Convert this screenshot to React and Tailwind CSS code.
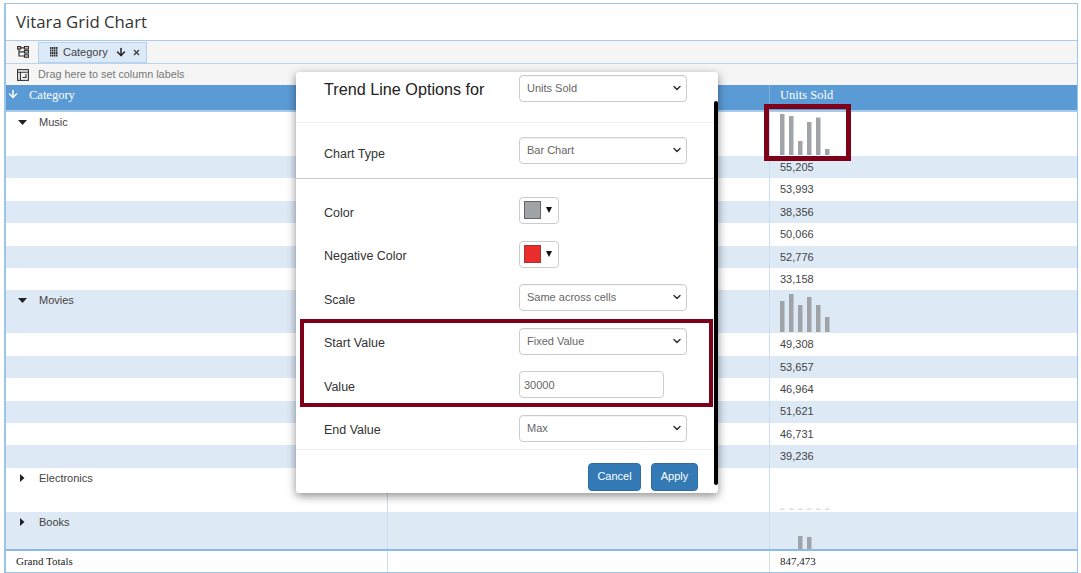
import React from 'react';
import { ArrowDown, ChevronDown, X } from 'lucide-react';

const COLS = 'grid grid-cols-[381px_382px_1fr]';

// sparkline bar heights, six slots per cell
const MUSIC_BARS = [41, 39, 14, 33, 37.5, 6];
const MOVIES_BARS = [31, 38, 27, 35, 27, 15];
const BOOKS_BARS = [0, 0, 13, 12, 0, 0];
const ELECTRONICS_BARS = [1.5, 1.5, 1.5, 1.5, 1.5, 1.5];

function Spark({ bars, height, light }) {
  return (
    <svg width="54" height={height} className="block">
      {bars.map((h, i) => (
        <rect key={i} x={i * 9} y={height - h} width="4.5" height={h} fill={light ? '#dcdde0' : '#a0a3a8'} />
      ))}
    </svg>
  );
}

function Row({ blue, h, label, open, value, children }) {
  return (
    <div className={`${COLS} ${h} ${blue ? 'bg-[#dde9f5]' : 'bg-white'}`}>
      <div className="flex items-start pl-[12px] pt-[3px] text-[11px] leading-[14px] text-[#444]">
        {label && (
          <>
            <span className="flex h-[14px] w-[21px] items-center">
              {open ? (
                <svg width="9" height="5" viewBox="0 0 9 5"><polygon points="0,0 9,0 4.5,5" fill="#222" /></svg>
              ) : (
                <svg width="9" height="8" viewBox="0 0 9 8"><polygon points="2,0 6.5,4 2,8" fill="#222" /></svg>
              )}
            </span>
            {label}
          </>
        )}
      </div>
      <div className="border-l border-[#c9dcf0]" />
      <div className="relative flex items-center border-l border-[#c9dcf0] pl-[10px] text-[11px] text-[#444]">
        {value}
        {children}
      </div>
    </div>
  );
}

function SelectBox({ value }) {
  return (
    <div className="relative w-[168px]">
      <select
        defaultValue={value}
        className="block h-[27px] w-full appearance-none rounded-[4px] border border-[#ccc] bg-white pl-[7px] text-[11px] text-[#666] shadow-[inset_0_1px_1px_rgba(0,0,0,0.05)]"
      >
        <option>{value}</option>
      </select>
      <ChevronDown size={12} strokeWidth={3} className="absolute right-[4px] top-[7px] text-[#333]" />
    </div>
  );
}

function ColorPick({ color, edge }) {
  return (
    <div className="flex h-[27px] w-[40px] items-start gap-[5px] rounded-[4px] border border-[#ccc] bg-white pl-[4px] pt-[3px]">
      <span className={`block h-[18px] w-[17px] border ${edge}`} style={{ background: color }} />
      <svg width="6" height="6" viewBox="0 0 6 6" className="mt-[6px]"><polygon points="0,0 6,0 3,6" fill="#111" /></svg>
    </div>
  );
}

function Field({ label, children }) {
  return (
    <div className="flex h-[27px] items-center">
      <div className="w-[223px] pl-[28px] pt-[5px] text-[12.5px] text-[#333]">{label}</div>
      {children}
    </div>
  );
}

function Modal() {
  return (
    <div className="absolute left-[296px] top-[72px] h-[421px] w-[422px] rounded-[3px] bg-white font-['Liberation_Sans',sans-serif] shadow-[0_3px_10px_rgba(0,0,0,0.45)]">
      <div className="flex h-[51px] items-start border-b border-[#f0f0f0] pt-[3px]">
        <div className="w-[223px] pl-[28px] pt-[3px] text-[16.2px] leading-[22px] text-[#222]">Trend Line Options for</div>
        <SelectBox value="Units Sold" />
      </div>
      <div className="flex h-[56px] items-start border-b border-[#ccc] pt-[14px]">
        <div className="w-[223px] pl-[28px] pt-[8px] text-[12.5px] text-[#333]">Chart Type</div>
        <SelectBox value="Bar Chart" />
      </div>
      <div className="flex flex-col gap-[16.5px] pb-[7px] pt-[18px]">
        <Field label="Color"><ColorPick color="#a0a3a8" edge="border-[#666]" /></Field>
        <Field label="Negative Color"><ColorPick color="#e92c2c" edge="border-[#a33]" /></Field>
        <Field label="Scale"><SelectBox value="Same across cells" /></Field>
        <Field label="Start Value"><SelectBox value="Fixed Value" /></Field>
        <Field label="Value">
          <input
            defaultValue="30000"
            className="h-[27px] w-[145px] rounded-[4px] border border-[#ccc] pl-[4px] text-[11px] text-[#666] outline-none"
          />
        </Field>
        <Field label="End Value"><SelectBox value="Max" /></Field>
      </div>
      <div className="flex justify-end gap-[10px] border-t border-[#eee] pr-[20px] pt-[13px]">
        <button className="h-[28px] w-[53px] rounded-[4px] border border-[#2e6da4] bg-[#337ab7] text-[11px] text-white">Cancel</button>
        <button className="h-[28px] w-[47px] rounded-[4px] border border-[#2e6da4] bg-[#337ab7] text-[11px] text-white">Apply</button>
      </div>
      {/* scrollbar */}
      <div className="absolute left-[418px] top-[29px] h-[384px] w-[4px] rounded-[2px] bg-black" />
      {/* highlight round start value */}
      <div className="absolute left-[4px] top-[247px] h-[88px] w-[413px] border-[4px] border-[#7f0019]" />
    </div>
  );
}

export default function App() {
  const musicValues = ['55,205', '53,993', '38,356', '50,066', '52,776', '33,158'];
  const movieValues = ['49,308', '53,657', '46,964', '51,621', '46,731', '39,236'];

  return (
    <div className="relative h-[573px] w-[1081px] overflow-hidden bg-white pl-[4px] pr-[3px] pt-[3px] font-['Liberation_Sans',sans-serif]">
      <div className="h-[570px] border border-l-2 border-[#9cc5ec]">
        <div className="flex h-[37px] items-center border-b border-[#a9cbee] pl-[10px] font-['Open_Sans',sans-serif] text-[16.8px] text-[#333]">
          Vitara Grid Chart
        </div>

        <div className="flex h-[23px] items-center gap-[9px] border-b border-[#b9d4ef] bg-[#f5f5f5] pl-[11px]">
          <svg width="12" height="12" viewBox="0 0 12 12" fill="none" stroke="#333" strokeWidth="1.2">
            <rect x="0.6" y="0.6" width="3" height="2.4" />
            <rect x="7.5" y="0.6" width="4" height="2.4" />
            <rect x="7.5" y="4.6" width="4" height="2.4" />
            <rect x="7.5" y="8.8" width="4" height="2.4" />
            <path d="M2 3v7h5.5M2 5.8h5.5M3.6 1.8h3.9" />
          </svg>
          <div className="flex h-[21px] w-[109px] items-center border border-[#b7d2ee] bg-[#dce9f6] pl-[11px] text-[11px] text-[#444]">
            <svg width="8" height="11" viewBox="0 0 8 11" fill="#333" className="mr-[5px]">
              {[0, 2, 4, 6].map((x) => [0, 2.5, 5, 7.5].map((y) => <rect key={`${x}-${y}`} x={x} y={y} width="1.5" height="2" />))}
            </svg>
            Category
            <ArrowDown size={12} strokeWidth={3} className="ml-[7px] text-[#222]" />
            <X size={9} strokeWidth={3} className="ml-[5px] text-[#333]" />
          </div>
        </div>

        <div className="flex h-[21px] items-center gap-[9px] bg-[#f5f5f5] pl-[11px] text-[10.8px] text-[#777]">
          <svg width="12" height="12" viewBox="0 0 12 12" fill="none" stroke="#333" strokeWidth="1.1">
            <rect x="0.6" y="0.6" width="10.8" height="10.8" />
            <path d="M0.6 3.2h10.8M3.4 3.2v8.2M9 5v3.5H5.5" />
          </svg>
          Drag here to set column labels
        </div>

        <div className={`${COLS} h-[27px] border-b-2 border-[#a9cbe9] bg-[#5b9bd5] font-['Liberation_Serif',serif] text-[12.5px] text-white`}>
          <div className="flex items-start pl-[1px] pt-[1px]">
            <ArrowDown size={12} strokeWidth={3} className="mt-[2px]" />
            <span className="ml-[10px]">Category</span>
          </div>
          <div />
          <div className="border-l border-[#7fb0e0] pl-[10px] pt-[1px]">Units Sold</div>
        </div>

        <Row h="h-[44px]" label="Music" open>
          <div className="absolute bottom-[1px] left-[10px]"><Spark bars={MUSIC_BARS} height={42} /></div>
        </Row>
        {musicValues.map((v, i) => (
          <Row key={v} blue={i % 2 === 0} h="h-[22.4px]" value={v} />
        ))}
        <Row blue h="h-[43px]" label="Movies" open>
          <div className="absolute bottom-[1px] left-[10px]"><Spark bars={MOVIES_BARS} height={39} /></div>
        </Row>
        {movieValues.map((v, i) => (
          <Row key={v} blue={i % 2 !== 0} h="h-[22.4px]" value={v} />
        ))}
        <Row h="h-[44px]" label="Electronics">
          <div className="absolute bottom-[2px] left-[10px]"><Spark bars={ELECTRONICS_BARS} height={2} light /></div>
        </Row>
        <Row blue h="h-[37px]" label="Books">
          <div className="absolute bottom-0 left-[10px]"><Spark bars={BOOKS_BARS} height={14} /></div>
        </Row>

        <div className={`${COLS} h-[23px] border-t-2 border-[#8db9e6] font-['Liberation_Serif',serif] text-[11px] text-[#222]`}>
          <div className="flex items-center pl-[10px]">Grand Totals</div>
          <div className="border-l border-[#c9dcf0]" />
          <div className="flex items-center border-l border-[#c9dcf0] pl-[10px]">847,473</div>
        </div>
      </div>

      {/* highlight round first sparkline */}
      <div className="absolute left-[764px] top-[104px] h-[57px] w-[87px] border-[5px] border-[#7f0019]" />
      <Modal />
    </div>
  );
}
